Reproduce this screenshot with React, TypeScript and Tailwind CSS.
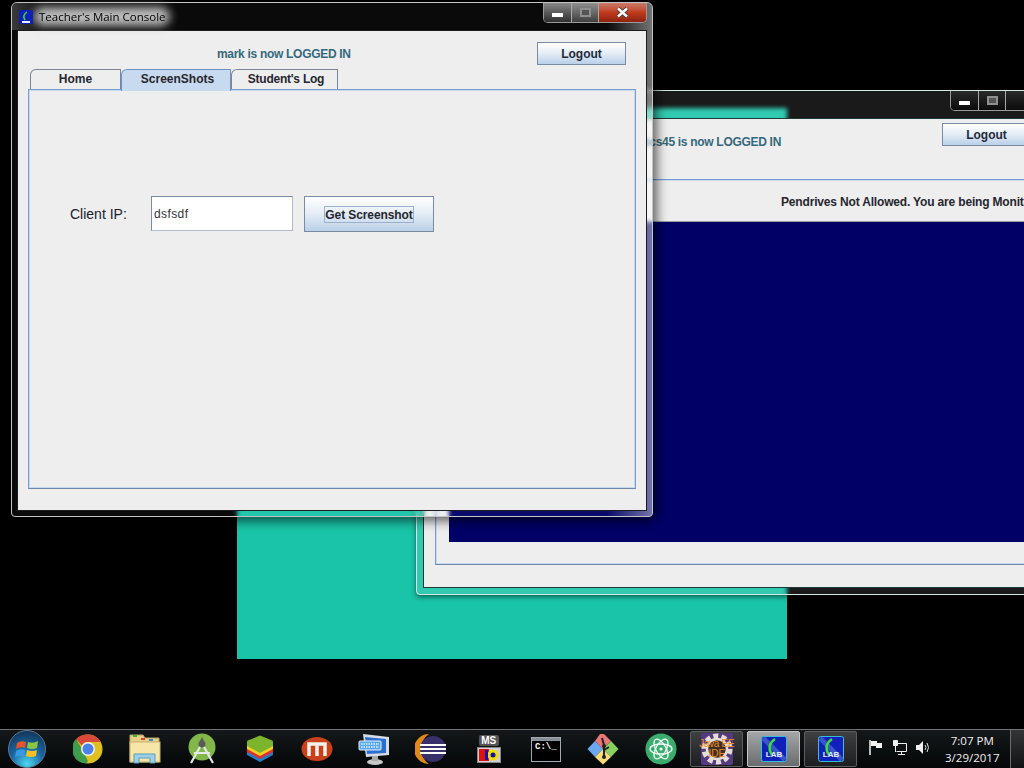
const uiFont = { fontFamily: '"Liberation Sans", Arial, sans-serif' };

const CaptionButtons = ({ active }: { active: boolean }) => (
  <div className="flex h-[20px] rounded-b-[5px] border border-t-0 border-[#9a9a9a] overflow-hidden">
    <div className={`w-[28px] flex items-center justify-center border-r border-[#a8a8a8] bg-gradient-to-b ${active ? 'from-[#8a8a8a] via-[#5a5a5a] to-[#303030]' : 'from-[#2a2a2a] to-[#0c0c0c]'}`}>
      <div className="w-[11px] h-[4px] mt-[4px] bg-white" />
    </div>
    <div className={`w-[27px] flex items-center justify-center border-r border-[#a8a8a8] bg-gradient-to-b ${active ? 'from-[#8f8f8f] via-[#686868] to-[#404040]' : 'from-[#2a2a2a] to-[#0c0c0c]'}`}>
      <div className="w-[11px] h-[9px] border-2 border-[#909090] bg-[#555555]" />
    </div>
    <div className={`w-[47px] flex items-center justify-center bg-gradient-to-b ${active ? 'from-[#c87a68] via-[#c03a1e] to-[#8c2210]' : 'from-[#2a2a2a] to-[#0c0c0c]'}`}>
      {active && (
        <svg width="13" height="11" viewBox="0 0 13 11">
          <path d="M2 1.500 L11 9.500 M11 1.500 L2 9.500" stroke="#3a3a3a" strokeWidth="4" />
          <path d="M2 1.500 L11 9.500 M11 1.500 L2 9.500" stroke="#ffffff" strokeWidth="2.400" />
        </svg>
      )}
    </div>
  </div>
);

const LogoutButton = ({ className }: { className: string }) => (
  <button
    className={`h-[23px] border border-[#7a8aa0] bg-gradient-to-b from-white via-[#e4ecf5] to-[#b9d0e8] text-[12px] font-bold text-[#222b3d] ${className}`}
    style={uiFont}
  >
    Logout
  </button>
);

const Tab = ({ label, className, selected }: { label: string; className: string; selected?: boolean }) => (
  <div
    className={`${className} flex justify-center rounded-tl-[6px] border-t border-r border-l pt-px text-[12px] leading-[17px] font-bold text-[#26262e] ${
      selected ? 'h-[22px] z-10 border-[#6d8fc7] border-b-0 bg-[#c8daef]' : 'h-[20px] border-[#7d8590] bg-[#eeeeee]'
    }`}
    style={uiFont}
  >
    {label}
  </div>
);

const LabIcon = () => (
  <svg width="26" height="26" viewBox="0 0 26 26">
    <rect x="0.500" y="0.500" width="25" height="25" rx="2" fill="#1020b8" stroke="#35c0d8" />
    <path d="M2 2 L24 24" stroke="#5878d8" strokeWidth="5" opacity="0.6" />
    <path d="M14 3 C8 7 7 13 11 19" stroke="#38e038" strokeWidth="2.500" fill="none" />
    <text x="13" y="21" textAnchor="middle" fontSize="8" fontWeight="bold" fill="#e8f0ff" fontFamily="Liberation Sans">LAB</text>
  </svg>
);

const StartOrb = () => (
  <svg width="38" height="38" viewBox="0 0 38 38">
    <defs>
      <radialGradient id="orb" cx="50%" cy="90%" r="85%">
        <stop offset="0" stopColor="#4fd8f0" />
        <stop offset="0.5" stopColor="#1a6aa8" />
        <stop offset="1" stopColor="#123a5e" />
      </radialGradient>
    </defs>
    <circle cx="19" cy="19" r="18.500" fill="url(#orb)" stroke="#5d7890" />
    <path d="M9 13 Q13 10 18 12 L17 18 Q12 16 8 19 Z" fill="#e8532a" />
    <path d="M20 12 Q25 14 30 11 L29 18 Q24 20 19 18 Z" fill="#8cc63e" />
    <path d="M8 21 Q12 18 17 20 L16 26 Q11 25 7 27 Z" fill="#3a9ae0" />
    <path d="M19 20 Q24 22 29 20 L28 26 Q23 28 18 26 Z" fill="#f4c020" />
  </svg>
);

const Chrome = () => (
  <svg width="30" height="30" viewBox="0 0 30 30">
    <circle cx="15" cy="15" r="14.500" fill="#e0c020" />
    <path d="M15 .5 A14.500 14.500 0 0 1 27.600 8 L15 8 A7 7 0 0 0 8.800 11.500 L3 5 A14.500 14.500 0 0 1 15 .5Z" fill="#d8493a" />
    <path d="M3 5 L9 15 L15 27 L13.500 29.400 A14.500 14.500 0 0 1 3 5Z" fill="#3f9c4c" />
    <circle cx="15" cy="15" r="7" fill="#f2f2f2" />
    <circle cx="15" cy="15" r="5.500" fill="#4b82e8" />
  </svg>
);

const Folder = () => (
  <svg width="32" height="30" viewBox="0 0 32 30">
    <path d="M1 1 H14 L16 4 H30 V28 H1 Z" fill="#e8cf88" stroke="#b8a060" />
    <rect x="4" y="1" width="4" height="2" fill="#38b838" />
    <rect x="12" y="4" width="4" height="2" fill="#d84030" />
    <rect x="20" y="5" width="4" height="2" fill="#3090d8" />
    <rect x="1" y="8" width="30" height="20" fill="#f6e6a8" stroke="#c8b070" />
    <path d="M5 29 V20 H26 V29 H21 V24 H10 V29 Z" fill="#9cd0e8" stroke="#5a9cc0" />
  </svg>
);

const AndroidStudio = () => (
  <svg width="28" height="32" viewBox="0 0 28 32">
    <circle cx="14" cy="14" r="13.500" fill="#82b74a" />
    <circle cx="14" cy="11" r="3.500" fill="#5a5a5a" />
    <path d="M12 8 L14 4 L16 8 Z" fill="#5a5a5a" />
    <path d="M12 14 L3 30 M16 14 L25 30 M6 20 H22" stroke="#e8e8e8" strokeWidth="2.200" fill="none" />
  </svg>
);

const BlueStacks = () => (
  <svg width="30" height="28" viewBox="0 0 30 28">
    <path d="M2 17 L15 10 L28 17 V20 L15 27 L2 20 Z" fill="#1f7fc8" />
    <path d="M2 14 L15 7 L28 14 V17 L15 24 L2 17 Z" fill="#e03030" />
    <path d="M2 11 L15 4 L28 11 V14 L15 21 L2 14 Z" fill="#f0d020" />
    <path d="M2 7 Q2 5 4 5 L15 0.500 L26 5 Q28 5 28 7 V11 L15 18 L2 11 Z" fill="#7cb52c" />
  </svg>
);

const RedM = () => (
  <svg width="32" height="26" viewBox="0 0 32 26">
    <ellipse cx="16" cy="13" rx="15.500" ry="12" fill="#c8401c" />
    <path d="M8 20 V8 H24 V20 M16 8 V20" stroke="#f4f0ea" strokeWidth="3.500" fill="none" />
  </svg>
);

const MonitorKeyboard = () => (
  <svg width="32" height="32" viewBox="0 0 32 32">
    <path d="M5 1 L31 4 V22 L8 24 Z" fill="#d8dce4" />
    <path d="M7 4 L28 6 V20 L9 21 Z" fill="#2a6ed0" />
    <rect x="1" y="8" width="22" height="9" rx="1" fill="#58a8f0" stroke="#e8f0fa" />
    <path d="M3 11 H21 M3 14 H21" stroke="#e8f4ff" strokeWidth="1.400" strokeDasharray="1.500 1" />
    <ellipse cx="17" cy="29" rx="8" ry="3" fill="#c8c8c8" />
    <rect x="14" y="23" width="6" height="5" fill="#a8a8a8" />
  </svg>
);

const Eclipse = () => (
  <svg width="32" height="32" viewBox="0 0 32 32">
    <path d="M14 1 A15 15 0 0 0 14 31 A18 18 0 0 1 14 1 Z" fill="#e08a18" />
    <circle cx="18" cy="16" r="13" fill="#37306b" />
    <rect x="5" y="11" width="26" height="2" fill="#ffffff" />
    <rect x="5" y="15" width="26" height="2" fill="#ffffff" />
    <rect x="5" y="19" width="26" height="2" fill="#ffffff" />
  </svg>
);

const MsDos = () => (
  <div className="flex flex-col items-center gap-[1px] w-[24px]">
    <div className="w-[20px] h-[11px] rounded-[2px] bg-[#555555] flex items-center justify-center text-[10px] leading-none font-bold text-white" style={uiFont}>MS</div>
    <svg width="24" height="16" viewBox="0 0 24 16">
      <rect x="0.500" y="0.500" width="23" height="15" fill="#d0d0d0" stroke="#888888" />
      <rect x="2" y="2" width="10" height="12" fill="#e01010" />
      <circle cx="16" cy="8" r="5.500" fill="#f0e000" />
      <rect x="8" y="3" width="3" height="10" fill="#1010b0" />
      <circle cx="16" cy="8" r="2.500" fill="#1010b0" />
    </svg>
  </div>
);

const Cmd = () => (
  <div className="w-[30px] h-[25px] border border-[#a0a8b0] bg-black flex flex-col">
    <div className="h-[3px] bg-[#8a9098]" />
    <span className="pl-[3px] pt-[2px] text-[9px] leading-none font-bold text-white" style={{ fontFamily: '"Liberation Mono", monospace' }}>C:\_</span>
  </div>
);

const GitDiamond = () => (
  <svg width="32" height="32" viewBox="0 0 32 32">
    <path d="M16 16 L8 24 L0.500 16 L8 8 Z" fill="#6aa8f0" />
    <path d="M16 16 L24 8 L31.500 16 L24 24 Z" fill="#88d060" />
    <path d="M16 16 L8 8 L13 1 L17 1 L24 8 Z" fill="#e87878" />
    <path d="M16 16 L24 24 L16 31.500 L8 24 Z" fill="#f8dc78" />
    <path d="M15 5 L17 12 V24" stroke="#222222" strokeWidth="2" fill="none" />
    <circle cx="17" cy="13" r="2" fill="#222222" />
    <circle cx="17" cy="24" r="2" fill="#222222" />
    <path d="M17 17 L22 14" stroke="#222222" strokeWidth="2" />
  </svg>
);

const Atom = () => (
  <svg width="32" height="32" viewBox="0 0 32 32">
    <circle cx="16" cy="16" r="15.500" fill="#3cab6e" />
    <g fill="none" stroke="#f4fff8" strokeWidth="1.300">
      <ellipse cx="16" cy="16" rx="11" ry="5" />
      <ellipse cx="16" cy="16" rx="11" ry="5" transform="rotate(60 16 16)" />
      <ellipse cx="16" cy="16" rx="11" ry="5" transform="rotate(120 16 16)" />
    </g>
    <circle cx="16" cy="16" r="1.600" fill="#f4fff8" />
  </svg>
);

const JavaEE = () => (
  <div className="relative w-[32px] h-[32px] rounded-[2px] bg-[#553a80] flex flex-col items-center justify-center text-[10px] leading-[10px] text-[#f58a1a]" style={uiFont}>
    <svg className="absolute inset-0" width="32" height="32" viewBox="0 0 32 32">
      <circle cx="16" cy="16" r="13" fill="none" stroke="#e4ded6" strokeWidth="5" strokeDasharray="5 3.170" />
      <circle cx="16" cy="16" r="10" fill="#3a3028" stroke="#e4ded6" strokeWidth="2.500" />
    </svg>
    <span className="relative whitespace-nowrap tracking-[-0.3px]">Java EE</span>
    <span className="relative">IDE</span>
  </div>
);

const TrayFlag = () => (
  <svg width="15" height="15" viewBox="0 0 15 15">
    <path d="M2 0 V15" stroke="#f4f4f4" strokeWidth="1.500" />
    <path d="M3 1 H9 V3 H14 V8 H8 V6 H3 Z" fill="#f4f4f4" />
  </svg>
);

const TrayNetwork = () => (
  <svg width="15" height="15" viewBox="0 0 15 15" fill="none" stroke="#f0f0f0">
    <path d="M1.500 0.500 H5.500 V5.500 H1.500 Z" fill="#f0f0f0" />
    <path d="M4.500 3.500 H14.500 V11.500 H4.500 M9.500 11.500 V14 M6 14.500 H13 M3.500 5.500 V12" />
  </svg>
);

const TrayVolume = () => (
  <svg width="16" height="15" viewBox="0 0 16 15" fill="none" stroke="#dddddd">
    <path d="M0 5 H3 L7 1 V14 L3 10 H0 Z" fill="#f0f0f0" stroke="none" />
    <path d="M9 5 Q11 7.500 9 10 M11 3 Q14 7.500 11 12" />
  </svg>
);

const pinned = [
  <Chrome key="chrome" />,
  <Folder key="folder" />,
  <AndroidStudio key="studio" />,
  <BlueStacks key="stacks" />,
  <RedM key="m" />,
  <MonitorKeyboard key="keyboard" />,
  <Eclipse key="eclipse" />,
  <MsDos key="dos" />,
  <Cmd key="cmd" />,
  <GitDiamond key="git" />,
  <Atom key="atom" />,
];

const Taskbar = () => (
  <div className="h-[39px] flex items-stretch border-t border-[#6e7274] bg-gradient-to-b from-[#15181a] to-[#050708]">
    <div className="w-[59px] shrink-0 pl-[8px] flex items-center"><StartOrb /></div>
    {pinned.map((icon) => (
      <div key={icon.key} className="w-[57.300px] shrink-0 flex items-center justify-center">{icon}</div>
    ))}
    <div className="ml-[1px] shrink-0 flex gap-[4px] py-px">
      <div className="w-[53px] flex items-center justify-center rounded-[2px] border border-[#5c5e60] bg-gradient-to-b from-[#3e4042] to-[#1c1e20]"><JavaEE /></div>
      <div className="w-[53px] flex items-center justify-center rounded-[2px] border border-[#c4c6c8] bg-gradient-to-b from-[#a4a6a8] to-[#6a6c6e]"><LabIcon /></div>
      <div className="w-[53px] flex items-center justify-center rounded-[2px] border border-[#5c5e60] bg-gradient-to-b from-[#3e4042] to-[#1c1e20]"><LabIcon /></div>
    </div>
    <div className="ml-[11px] shrink-0 flex items-center gap-[9px] pb-[3px]">
      <TrayFlag />
      <TrayNetwork />
      <TrayVolume />
    </div>
    <div className="w-[74px] shrink-0 ml-[3px] flex flex-col items-center justify-center text-[11.500px] leading-[17px] text-[#f0f0f0]" style={{ fontFamily: '"Open Sans", sans-serif' }}>
      <span>7:07 PM</span>
      <span>3/29/2017</span>
    </div>
    <div className="ml-auto w-[14px] border-l border-[#6a6c6e] bg-gradient-to-b from-[#333537] to-[#111315]" />
  </div>
);

const BackWindow = () => (
  <div className="absolute left-[416px] top-[90px] w-[660px] h-[505px] flex flex-col rounded-b-[4px] border border-[#d8e8e4] bg-white/10 backdrop-blur-[2px] shadow-[0_2px_5px_rgba(0,0,0,0.5)]">
    <div className="relative h-[27px]">
      <div className="absolute left-[533px] top-0 w-[110px]"><CaptionButtons active={false} /></div>
    </div>
    <div className="relative mx-[6px] mb-[6px] flex-1 border border-[#1e3a36] bg-[#eeeeee] flex flex-col">
      <div className="h-[60px] flex items-start pt-[4px] whitespace-nowrap">
        <span className="w-[202px] ml-[155px] mt-[12px] text-right text-[12px] leading-[14px] font-bold tracking-[-0.3px] text-[#35697c]" style={uiFont}>abcs45 is now LOGGED IN</span>
        <LogoutButton className="ml-[161px] w-[89px] shrink-0" />
      </div>
      <div className="mx-[11px] h-[386px] border border-[#7a9bcf] border-b-[#6f87a8] shadow-[inset_0_1px_0_#c8daef,inset_1px_0_0_#c8daef,inset_0_-1px_0_#c8daef] flex flex-col">
        <div className="h-[41px] pt-[3px] pl-[345px] flex items-center text-[12px] font-bold tracking-[-0.17px] text-[#26262e] whitespace-nowrap" style={uiFont}>
          Pendrives Not Allowed. You are being Monitored
        </div>
        <div className="ml-[13px] mr-[12px] h-[321px] border-t border-[#9a9aa8] bg-[#000066]" />
      </div>
    </div>
  </div>
);

const FrontWindow = () => (
  <div className="absolute left-[11px] top-[2px] w-[642px] h-[515px] flex flex-col rounded-t-[6px] rounded-b-[4px] border border-[#c4c4c4] bg-[linear-gradient(to_right,rgba(255,255,255,0.04)_93%,rgba(255,255,255,0.45))] backdrop-blur-[2px] shadow-[0_0_11px_4px_rgba(0,0,0,0.6)]">
    <div className="relative h-[27px] flex items-center pl-[7px] rounded-t-[6px] bg-gradient-to-r from-white/20 to-transparent to-[6%]">
      <div className="absolute left-[22px] top-[4px] w-[136px] h-[19px] rounded-full bg-[#bdbdbd] blur-[5px]" />
      <div className="relative"><svg width="14" height="14" viewBox="0 0 14 14"><rect width="14" height="14" fill="#1020b8" /><path d="M8 2 C5 4 4 7 6 10" stroke="#38e038" strokeWidth="1.500" fill="none" /><path d="M3 12 H11" stroke="#e8f0ff" strokeWidth="2" /></svg></div>
      <span className="relative ml-[6px] text-[11.500px] text-black" style={{ fontFamily: '"Open Sans", sans-serif' }}>Teacher's Main Console</span>
      <div className="absolute right-[5px] top-0"><CaptionButtons active /></div>
    </div>
    <div className="mx-[5px] mb-[5px] flex-1 border border-[#1c1c1c] bg-[#eeeeee] flex flex-col">
      <div className="h-[38px] pt-[11px] flex items-start">
        <span className="ml-[199px] h-[23px] flex items-center text-[12px] font-bold tracking-[-0.3px] text-[#35697c]" style={uiFont}>mark is now LOGGED IN</span>
        <LogoutButton className="ml-auto mr-[20px] w-[89px]" />
      </div>
      <div className="pl-[12px] h-[20px] flex items-start">
        <Tab label="Home" className="w-[91px]" />
        <Tab label="ScreenShots" className="w-[110px] pl-[3px]" selected />
        <Tab label="Student's Log" className="w-[107px] pl-[3px] tracking-[-0.25px]" />
      </div>
      <div className="mx-[10px] h-[400px] border border-[#7a9bcf] border-b-[#6f87a8] shadow-[inset_0_1px_0_#c8daef,inset_1px_0_0_#c8daef,inset_0_-1px_0_#c8daef,inset_-1px_0_0_#c8daef] pt-[106px] pl-[41px] flex items-start">
        <span className="w-[81px] h-[35px] pt-[1px] flex items-center text-[14px] text-[#20202a]" style={uiFont}>Client IP:</span>
        <div className="w-[142px] h-[35px] pt-[1px] flex items-center pl-[2px] border border-[#7a8aa0] border-r-[#b0bccc] border-b-[#b0bccc] bg-white text-[12px] tracking-[0.4px] text-[#33333a]" style={uiFont}>dsfsdf</div>
        <button className="ml-[11px] w-[130px] h-[36px] flex items-center justify-center border border-[#7a8aa0] bg-gradient-to-b from-white via-[#e4ecf5] to-[#b9d0e8]">
          <span className="w-[90px] h-[17px] pt-px flex items-center justify-center border border-[#9db0cc] text-[12px] font-bold tracking-[-0.1px] whitespace-nowrap text-[#26262e]" style={uiFont}>Get Screenshot</span>
        </button>
      </div>
    </div>
  </div>
);

export default function App() {
  return (
    <div className="w-[1024px] h-[768px] flex flex-col overflow-hidden bg-black">
      <div className="relative flex-1 overflow-hidden">
        {/* Janela de trás com o app verde por baixo */}
        <div className="absolute left-[237px] top-[108px] w-[550px] h-[551px] bg-[#1ac4a8]" />
        <BackWindow />
        <FrontWindow />
      </div>
      <Taskbar />
    </div>
  );
}
